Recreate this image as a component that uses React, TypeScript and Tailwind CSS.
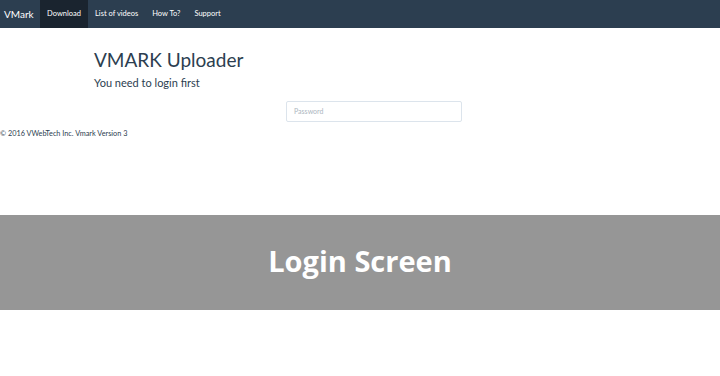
export default function App() {
  const lato = { fontFamily: "Lato, 'Noto Sans', sans-serif" };
  return (
    <div className="w-[720px] h-[376px] bg-white flex flex-col" style={lato}>
      <nav className="h-[28px] bg-[#2c3e50] flex items-stretch text-white">
        <div className="flex items-center w-[40px] pl-[4px] text-[10px]">VMark</div>
        <div className="flex items-center justify-center w-[48px] bg-[#1a242f] text-[7.5px]">Download</div>
        <div className="flex items-center px-[7px] text-[7.5px]">List of videos</div>
        <div className="flex items-center px-[7px] text-[7.5px]">How To?</div>
        <div className="flex items-center px-[7px] text-[7.5px]">Support</div>
      </nav>
      <div className="h-[187px] flex flex-col">
        <div className="pl-[94px] pt-[20px] text-[#2c3e50]">
          <h1 className="text-[19px] leading-[24px]">VMARK Uploader</h1>
          <p className="text-[11px] leading-[14px] mt-[4px]">You need to login first</p>
        </div>
        <div className="pl-[286px] mt-[11px]">
          <div className="w-[176px] h-[21px] border border-[#dce4ec] rounded-[2px] flex items-center px-[7px] text-[7px] text-[#acb6c0]">
            Password
          </div>
        </div>
        <div className="text-[7.3px] text-[#2c3e50] mt-[7px] leading-[10px]">© 2016 VWebTech Inc. Vmark Version 3</div>
      </div>
      <div className="h-[95px] bg-[#969696] flex items-center justify-center pb-[4px]">
        <span className="text-white font-bold text-[29px]" style={{ fontFamily: "'Open Sans', sans-serif" }}>Login Screen</span>
      </div>
    </div>
  );
}
